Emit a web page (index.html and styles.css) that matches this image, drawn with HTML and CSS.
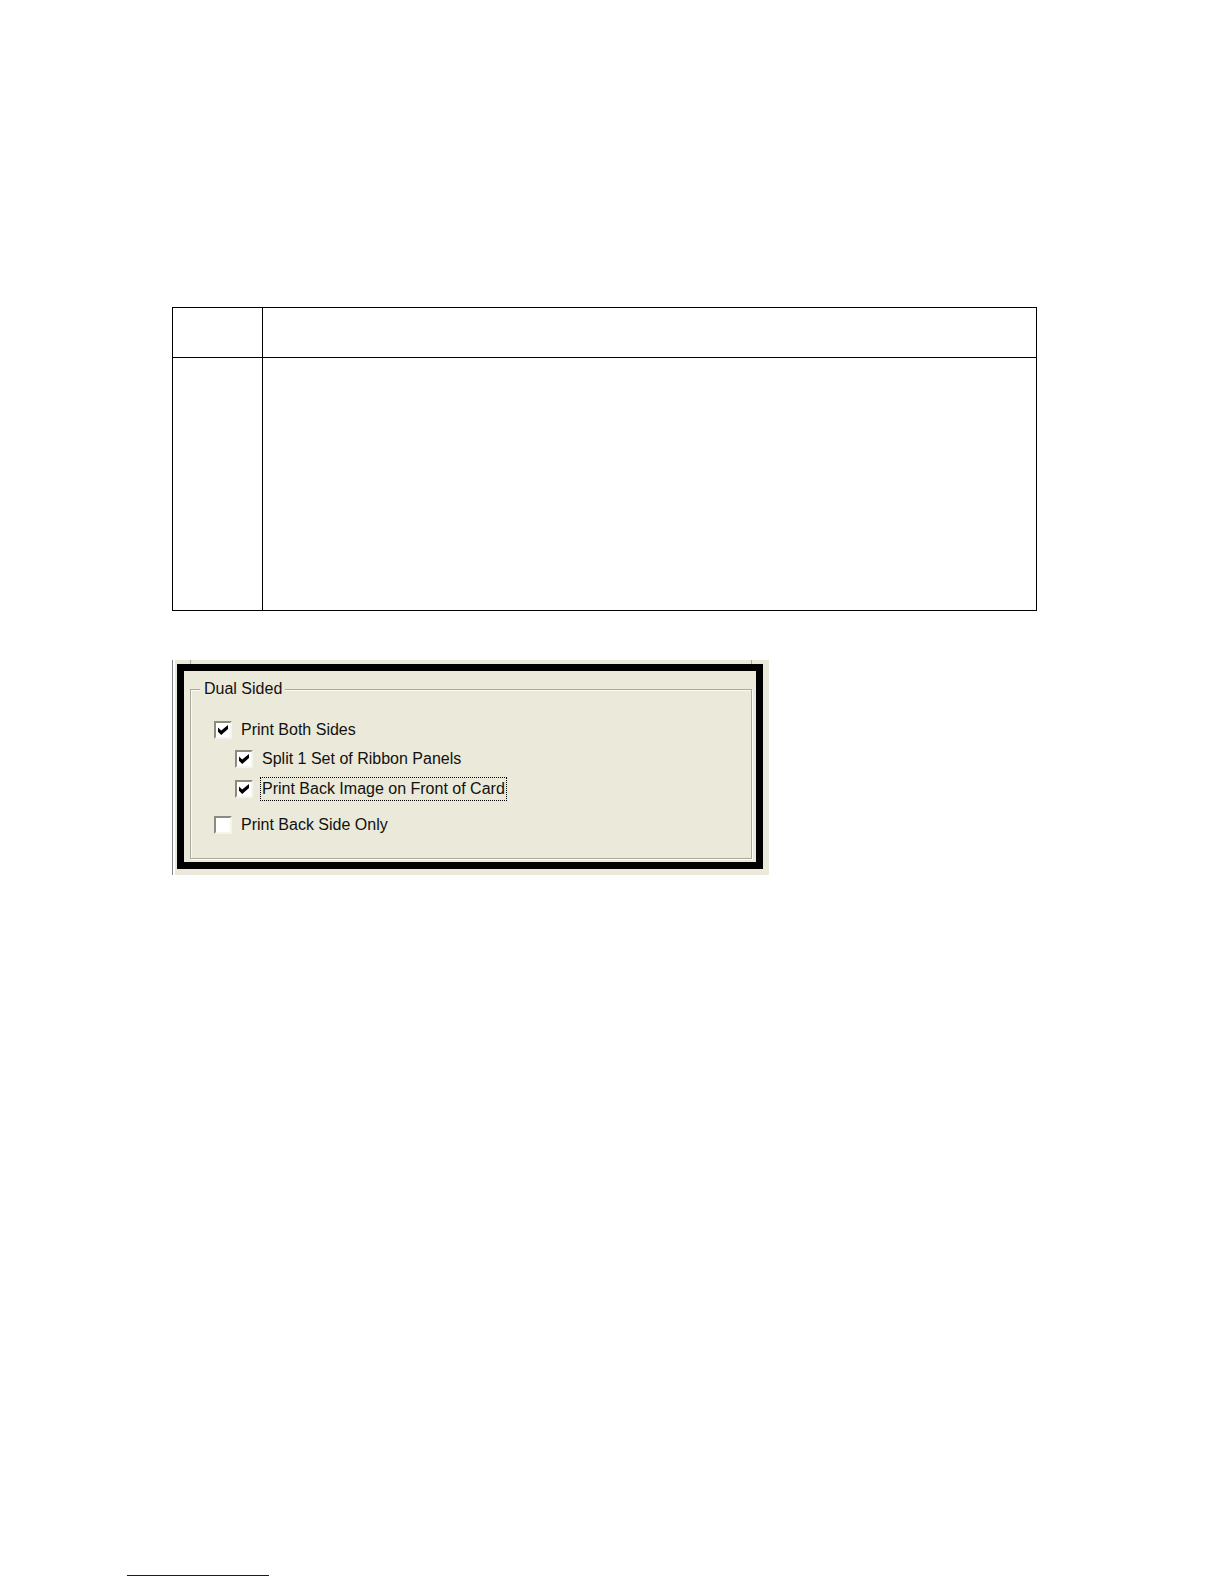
FILE: index.html
```html
<!DOCTYPE html>
<html lang="en">
<head>
<meta charset="utf-8">
<title>Dual Sided</title>
<link rel="stylesheet" href="styles.css">
</head>
<body>
<main class="content">
  <table class="steps">
    <colgroup><col class="step-col"><col></colgroup>
    <thead><tr class="head-row"><th></th><th></th></tr></thead>
    <tbody><tr class="body-row"><td></td><td></td></tr></tbody>
  </table>
  <form class="window">
    <div class="group-tail"></div>
    <div class="highlight">
      <fieldset class="group">
        <legend>Dual Sided</legend>
        <div class="options">
          <label class="option"><input type="checkbox" checked><span>Print Both Sides</span></label>
          <div class="sub-options">
            <label class="option"><input type="checkbox" checked><span>Split 1 Set of Ribbon Panels</span></label>
            <label class="option focused"><input type="checkbox" checked><span>Print Back Image on Front of Card</span></label>
          </div>
          <label class="option"><input type="checkbox"><span>Print Back Side Only</span></label>
        </div>
      </fieldset>
    </div>
  </form>
</main>
<footer class="footer"><hr class="link-rule"></footer>
</body>
</html>
```
FILE: styles.css
```css
* { box-sizing: border-box; }

body {
  margin: 0;
  min-height: 100vh;
  display: flex;
  flex-direction: column;
  background: #fff;
  color: #111;
  font: 16px/20px "Liberation Sans", Arial, sans-serif;
}

.content { padding: 307px 187px 40px 172px; }

.steps {
  width: 100%;
  table-layout: fixed;
  border-collapse: collapse;
}
.steps th, .steps td { border: 1px solid #000; padding: 0; }
.step-col { width: 90px; }
.head-row { height: 50px; }
.body-row { height: 253px; }

.window {
  max-width: 597px;
  margin-top: 49px;
  padding: 0 6px 6px 4px;
  background: #ebe9d9;
  border-left: 1px solid #85857f;
  box-shadow: inset 2px 0 #fff;
}

.group-tail {
  height: 4px;
  margin: 0 11px 0 13px;
  border: solid #aaa99c;
  border-width: 0 1px;
}

.highlight {
  border: 7px solid #000;
  padding: 8px 4px 3px 6px;
}

.group {
  margin: 0;
  min-width: 0;
  padding: 0 0 23px;
  border: 1px solid #aaa99c;
  box-shadow: 1px 1px #fff, inset 1px 1px #fafaf0;
}
.group legend { margin-left: 9px; padding: 0 3px 0 4px; background: #ebe9d9; }

.options {
  display: flex;
  flex-direction: column;
  align-items: flex-start;
  gap: 16px;
  padding: 21px 23px 0;
}
.sub-options {
  display: flex;
  flex-direction: column;
  align-items: flex-start;
  gap: 10px;
  margin: -7px 0 0 21px;
}

.option { display: flex; align-items: center; gap: 9px; }
.option span { white-space: nowrap; }
.focused span { outline: 1px dotted #000; outline-offset: 1px; }

.option input {
  appearance: none;
  flex: none;
  width: 18px;
  height: 18px;
  margin: 0;
  background: #fff;
  border: 2px solid;
  border-color: #8d8b80 #f6f5ec #f6f5ec #8d8b80;
  display: grid;
  place-items: center;
}
.option input:checked::before {
  content: "";
  width: 10px;
  height: 10px;
  background: #000;
  clip-path: polygon(0 25%, 32% 55%, 100% 0, 100% 40%, 32% 100%, 0 68%);
}

.footer { margin-top: auto; padding: 0 127px 8px; }
.link-rule {
  width: 142px;
  margin: 0;
  border: 0;
  border-top: 1px solid #10107a;
}
```
